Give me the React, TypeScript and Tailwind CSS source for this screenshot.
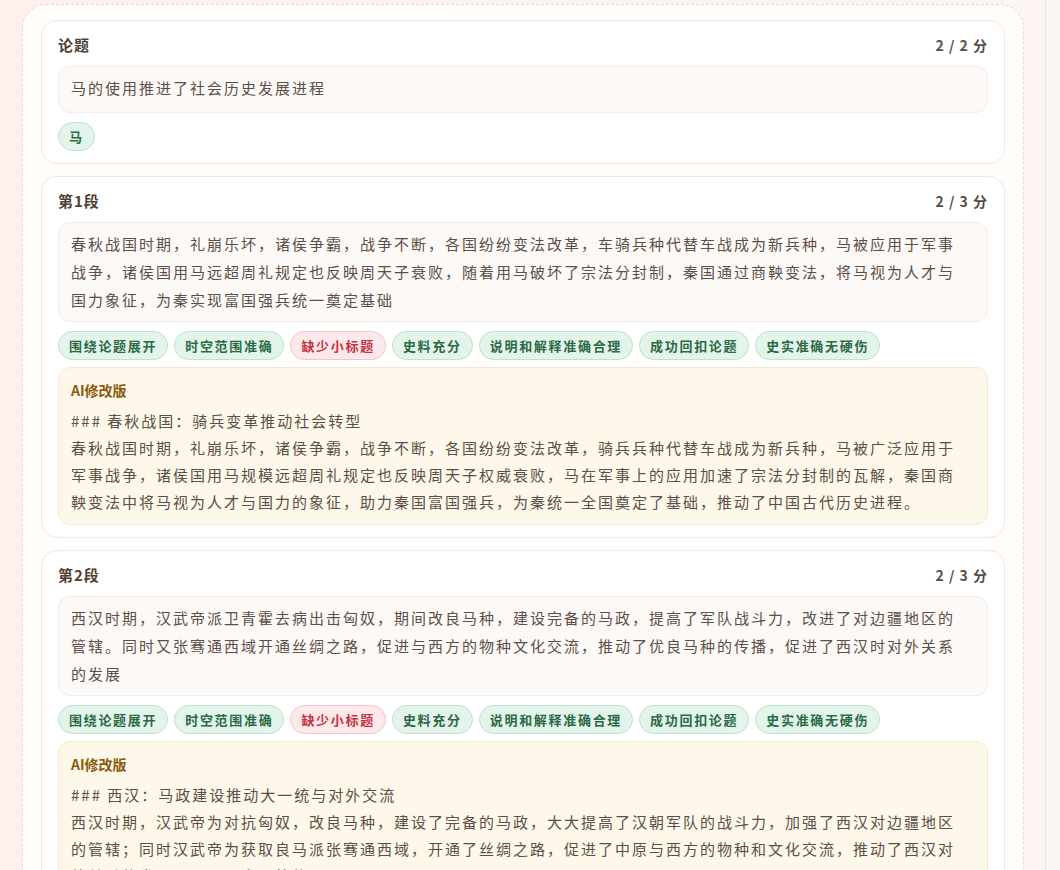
import React from 'react'

type Tag = { label: string; bad?: boolean }

interface Section {
  title: string
  score: string
  text: string
  tags: Tag[]
  revision?: string
}

const goodTags = (labels: string[]): Tag[] => labels.map((label) => ({ label }))

const paragraphTags: Tag[] = [
  { label: '围绕论题展开' },
  { label: '时空范围准确' },
  { label: '缺少小标题', bad: true },
  ...goodTags(['史料充分', '说明和解释准确合理', '成功回扣论题', '史实准确无硬伤']),
]

const sections: Section[] = [
  {
    title: '论题',
    score: '2 / 2 分',
    text: '马的使用推进了社会历史发展进程',
    tags: [{ label: '马' }],
  },
  {
    title: '第1段',
    score: '2 / 3 分',
    text: '春秋战国时期，礼崩乐坏，诸侯争霸，战争不断，各国纷纷变法改革，车骑兵种代替车战成为新兵种，马被应用于军事战争，诸侯国用马远超周礼规定也反映周天子衰败，随着用马破坏了宗法分封制，秦国通过商鞅变法，将马视为人才与国力象征，为秦实现富国强兵统一奠定基础',
    tags: paragraphTags,
    revision:
      '### 春秋战国：骑兵变革推动社会转型\n春秋战国时期，礼崩乐坏，诸侯争霸，战争不断，各国纷纷变法改革，骑兵兵种代替车战成为新兵种，马被广泛应用于军事战争，诸侯国用马规模远超周礼规定也反映周天子权威衰败，马在军事上的应用加速了宗法分封制的瓦解，秦国商鞅变法中将马视为人才与国力的象征，助力秦国富国强兵，为秦统一全国奠定了基础，推动了中国古代历史进程。',
  },
  {
    title: '第2段',
    score: '2 / 3 分',
    text: '西汉时期，汉武帝派卫青霍去病出击匈奴，期间改良马种，建设完备的马政，提高了军队战斗力，改进了对边疆地区的管辖。同时又张骞通西域开通丝绸之路，促进与西方的物种文化交流，推动了优良马种的传播，促进了西汉时对外关系的发展',
    tags: paragraphTags,
    revision:
      '### 西汉：马政建设推动大一统与对外交流\n西汉时期，汉武帝为对抗匈奴，改良马种，建设了完备的马政，大大提高了汉朝军队的战斗力，加强了西汉对边疆地区的管辖；同时汉武帝为获取良马派张骞通西域，开通了丝绸之路，促进了中原与西方的物种和文化交流，推动了西汉对外关系的发展，巩固了大一统的局面。',
  },
]

function Chip({ tag }: { tag: Tag }) {
  return (
    <span
      className={
        tag.bad
          ? 'rounded-full border border-[#f3c4c9] bg-[#fde9eb] px-[10px] py-[4px] text-[13px] leading-[19px] font-bold tracking-[1.7px] text-[#c2343f]'
          : 'rounded-full border border-[#bfe1cd] bg-[#e3f4ea] px-[10px] py-[4px] text-[13px] leading-[19px] font-bold tracking-[1.7px] text-[#2c6a46]'
      }
    >
      {tag.label}
    </span>
  )
}

function SectionCard({ section }: { section: Section }) {
  return (
    <div className="rounded-2xl border border-[#efe8e4] bg-white px-4 pt-[14px] pb-[12px]">
      {/* header */}
      <div className="flex items-center justify-between">
        <span className="text-[15px] leading-5 font-bold tracking-[1px] text-[#4f3f37]">
          {section.title}
        </span>
        <span className="text-[14px] leading-5 font-bold tracking-[1px] text-[#5a4c45]">
          {section.score}
        </span>
      </div>

      {/* original text */}
      <div className="mt-[11px] min-h-[47px] rounded-xl border border-[#f3ece7] bg-[#fdf9f6] py-[7px] pr-6 pl-3 text-[15px] leading-[28px] tracking-[2px] text-[#5c4f47]">
        {section.text}
      </div>

      {/* tags */}
      <div className="mt-[9px] flex flex-wrap gap-[6px]">
        {section.tags.map((tag) => (
          <Chip key={tag.label} tag={tag} />
        ))}
      </div>

      {/* AI revision */}
      {section.revision && (
        <div className="mt-[7px] rounded-xl border border-[#f5eacb] bg-[#fdf8e9] pt-[11px] pr-6 pb-[9px] pl-3">
          <p className="text-[14px] leading-[22px] font-bold text-[#8b5a12]">AI修改版</p>
          <p className="mt-[6px] whitespace-pre-wrap text-[15px] leading-[27px] tracking-[2px] text-[#5c4f47]">
            {section.revision}
          </p>
        </div>
      )}
    </div>
  )
}

export default function App() {
  return (
    <div className="flex min-h-[870px] bg-gradient-to-r from-[#fdf0ed] to-[#fcf5f2] font-['Noto_Sans_CJK_SC','Noto_Sans',sans-serif]">
      <div className="mt-[4px] ml-[22px] w-[1002px] shrink-0 rounded-t-[24px] border border-dashed border-[#e6d9d4] bg-[#fffcfa] px-[18px] pt-[15px]">
        <div className="flex flex-col gap-3">
          {sections.map((section) => (
            <SectionCard key={section.title} section={section} />
          ))}
        </div>
      </div>
      <div className="ml-[21px] flex-1 border-l border-[#efe4e0] bg-[#fbf6f4]" />
    </div>
  )
}
